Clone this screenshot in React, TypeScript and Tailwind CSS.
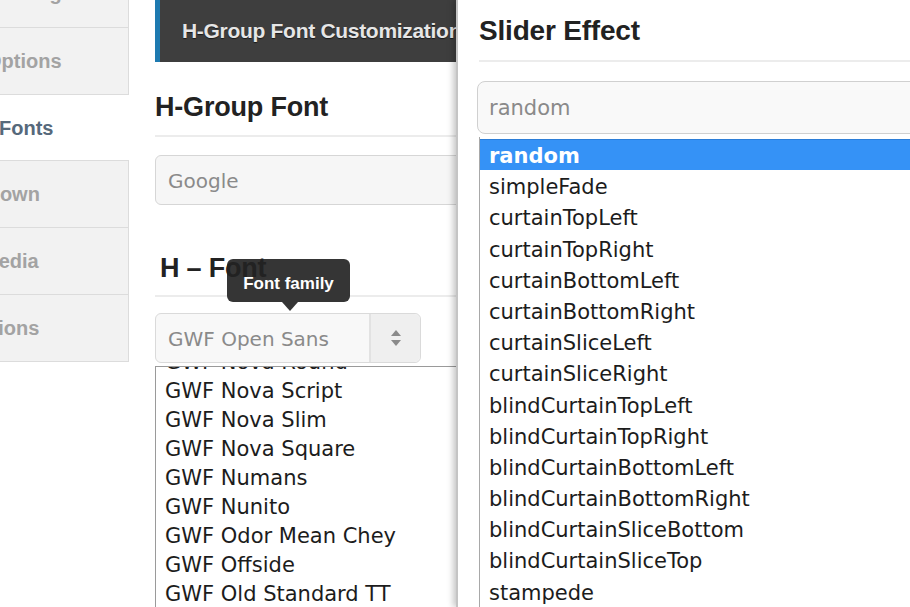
import React from 'react';

const tabs = [
  { label: 'Settings', active: false, h: 'h-[28px]', pad: 'ml-[-6px] -mt-[42px]' },
  { label: 'Options', active: false, h: 'h-[67px]', pad: 'ml-[-14px]' },
  { label: 'Fonts', active: true, h: 'h-[66px]', pad: 'ml-[-1px]' },
  { label: 'Dropdown', active: false, h: 'h-[67px]', pad: 'ml-[-59px]' },
  { label: 'Media', active: false, h: 'h-[67px]', pad: 'ml-[-18px]' },
  { label: 'Actions', active: false, h: 'h-[67px]', pad: 'ml-[-34px]' },
];

const fontList = [
  'GWF Nova Round',
  'GWF Nova Script',
  'GWF Nova Slim',
  'GWF Nova Square',
  'GWF Numans',
  'GWF Nunito',
  'GWF Odor Mean Chey',
  'GWF Offside',
  'GWF Old Standard TT',
  'GWF Oldenburg',
];

const effects = [
  'random',
  'simpleFade',
  'curtainTopLeft',
  'curtainTopRight',
  'curtainBottomLeft',
  'curtainBottomRight',
  'curtainSliceLeft',
  'curtainSliceRight',
  'blindCurtainTopLeft',
  'blindCurtainTopRight',
  'blindCurtainBottomLeft',
  'blindCurtainBottomRight',
  'blindCurtainSliceBottom',
  'blindCurtainSliceTop',
  'stampede',
  'mosaic',
];

const heading = "font-['Liberation_Sans',Arial,sans-serif] font-bold text-[#222] tracking-[-0.2px]";
const lucida = "font-['DejaVu_Sans','Liberation_Sans',sans-serif]";

function UpDownIcon() {
  return (
    <svg width="12" height="18" viewBox="0 0 12 18" fill="#8a8a8a">
      <path d="M6 1 L11 7 H1 Z" />
      <path d="M6 17 L11 11 H1 Z" />
    </svg>
  );
}

function Sidebar() {
  return (
    <div className="w-[129px] shrink-0 flex flex-col">
      {tabs.map((t) => (
        <div
          key={t.label}
          className={
            t.active
              ? `${t.h} flex items-center overflow-hidden bg-white border-b border-[#dcdcdc]`
              : `${t.h} flex items-center overflow-hidden bg-[#f2f2f2] border-b border-r border-[#dcdcdc]`
          }
        >
          <span
            className={`${t.pad} whitespace-nowrap text-[20px] font-bold font-['Liberation_Sans',Arial,sans-serif] ${
              t.active ? 'text-[#56697b]' : 'text-[#a3a3a3]'
            }`}
          >
            {t.label}
          </span>
        </div>
      ))}
    </div>
  );
}

function FontColumn() {
  return (
    <div className="relative ml-[26px] w-[303px] shrink-0 flex flex-col">
      <div className="h-[62px] shrink-0 bg-[#3e3e3e] border-l-[5px] border-[#1e7ab0] flex items-center pl-[22px] overflow-hidden">
        <span className="whitespace-nowrap text-[21px] font-bold text-[#e6e6e6] font-['Liberation_Sans',Arial,sans-serif] tracking-[-0.3px] [text-shadow:0_1px_1px_rgba(0,0,0,0.6)]">
          H-Group Font Customization
        </span>
      </div>

      <h2 className={`${heading} text-[27px] leading-[32px] mt-[29px]`}>H-Group Font</h2>
      <div className="h-[2px] bg-[#ececec] mt-[12px]" />

      <div className="mt-[18px] h-[50px] w-[320px] rounded-[6px] border border-[#d6d6d6] bg-[#f6f6f6] flex items-center pl-[12px] pt-[2px]">
        <span className={`${lucida} text-[20px] text-[#8a8a8a]`}>Google</span>
      </div>

      <h2 className={`${heading} relative z-10 text-[27px] leading-[32px] mt-[47px] pl-[5px]`}>H – Font</h2>
      <div className="h-[2px] bg-[#ececec] mt-[11px]" />

      <div className="mt-[16px] h-[50px] w-[266px] rounded-[6px] border border-[#dadada] bg-[#f8f8f8] flex">
        <div className="flex-1 flex items-center pl-[12px] pt-[2px] border-r-2 border-[#e2e2e2]">
          <span className={`${lucida} text-[20px] text-[#8a8a8a]`}>GWF Open Sans</span>
        </div>
        <div className="w-[49px] flex items-center justify-center bg-[#efefef] rounded-r-[6px]">
          <UpDownIcon />
        </div>
      </div>

      <div className="mt-[3px] flex-1 w-[310px] border-t border-l border-[#9a9a9a] bg-white overflow-hidden">
        <div className="-mt-[19px]">
          {fontList.map((f) => (
            <div key={f} className={`${lucida} h-[29px] leading-[29px] pl-[9px] text-[21px] text-[#1c1c1c] whitespace-nowrap`}>
              {f}
            </div>
          ))}
        </div>
      </div>

      {/* tooltip over the H – Font heading */}
      <div className="absolute left-[72px] top-[259px] w-[123px] h-[43px] rounded-[6px] bg-[#353535] flex items-center justify-center pt-[6px]">
        <span className="text-[17px] font-bold text-white font-['Liberation_Sans',Arial,sans-serif]">Font family</span>
        <div className="absolute left-[55px] top-[43px] w-0 h-0 border-l-[8px] border-r-[8px] border-t-[9px] border-l-transparent border-r-transparent border-t-[#353535]" />
      </div>
    </div>
  );
}

function EffectPanel() {
  return (
    <div className="relative z-20 flex-1 min-w-0 -ml-[2px] bg-white border-l-2 border-[#c4c4c4] shadow-[-3px_0_6px_rgba(0,0,0,0.22)] pl-[21px] flex flex-col overflow-hidden">
      <h2 className={`${heading} text-[28px] leading-[33px] mt-[14px]`}>Slider Effect</h2>
      <div className="h-[2px] bg-[#ececec] mt-[13px]" />

      <div className="mt-[19px] -ml-[2px] -mr-[20px] h-[53px] shrink-0 rounded-[8px] border border-[#d0d0d0] bg-[#f9f9f9] flex items-center pl-[11px] pt-[3px]">
        <span className={`${lucida} text-[21px] text-[#8a8a8a]`}>random</span>
      </div>

      <div className="mt-[3px] flex-1 border-l border-[#a8a8a8] pt-[2px] overflow-hidden">
        {effects.map((e, i) => (
          <div
            key={e}
            className={
              i === 0
                ? `${lucida} h-[31.2px] leading-[33px] pl-[9px] text-[21px] font-bold text-white bg-[#3592f6] border-t border-[#2c7ed8] whitespace-nowrap`
                : `${lucida} h-[31.2px] leading-[34px] pl-[9px] text-[21px] text-[#1c1c1c] whitespace-nowrap`
            }
          >
            {e}
          </div>
        ))}
      </div>
    </div>
  );
}

export default function App() {
  return (
    <div className="w-[910px] h-[607px] overflow-hidden bg-white flex">
      <Sidebar />
      <FontColumn />
      <EffectPanel />
    </div>
  );
}
